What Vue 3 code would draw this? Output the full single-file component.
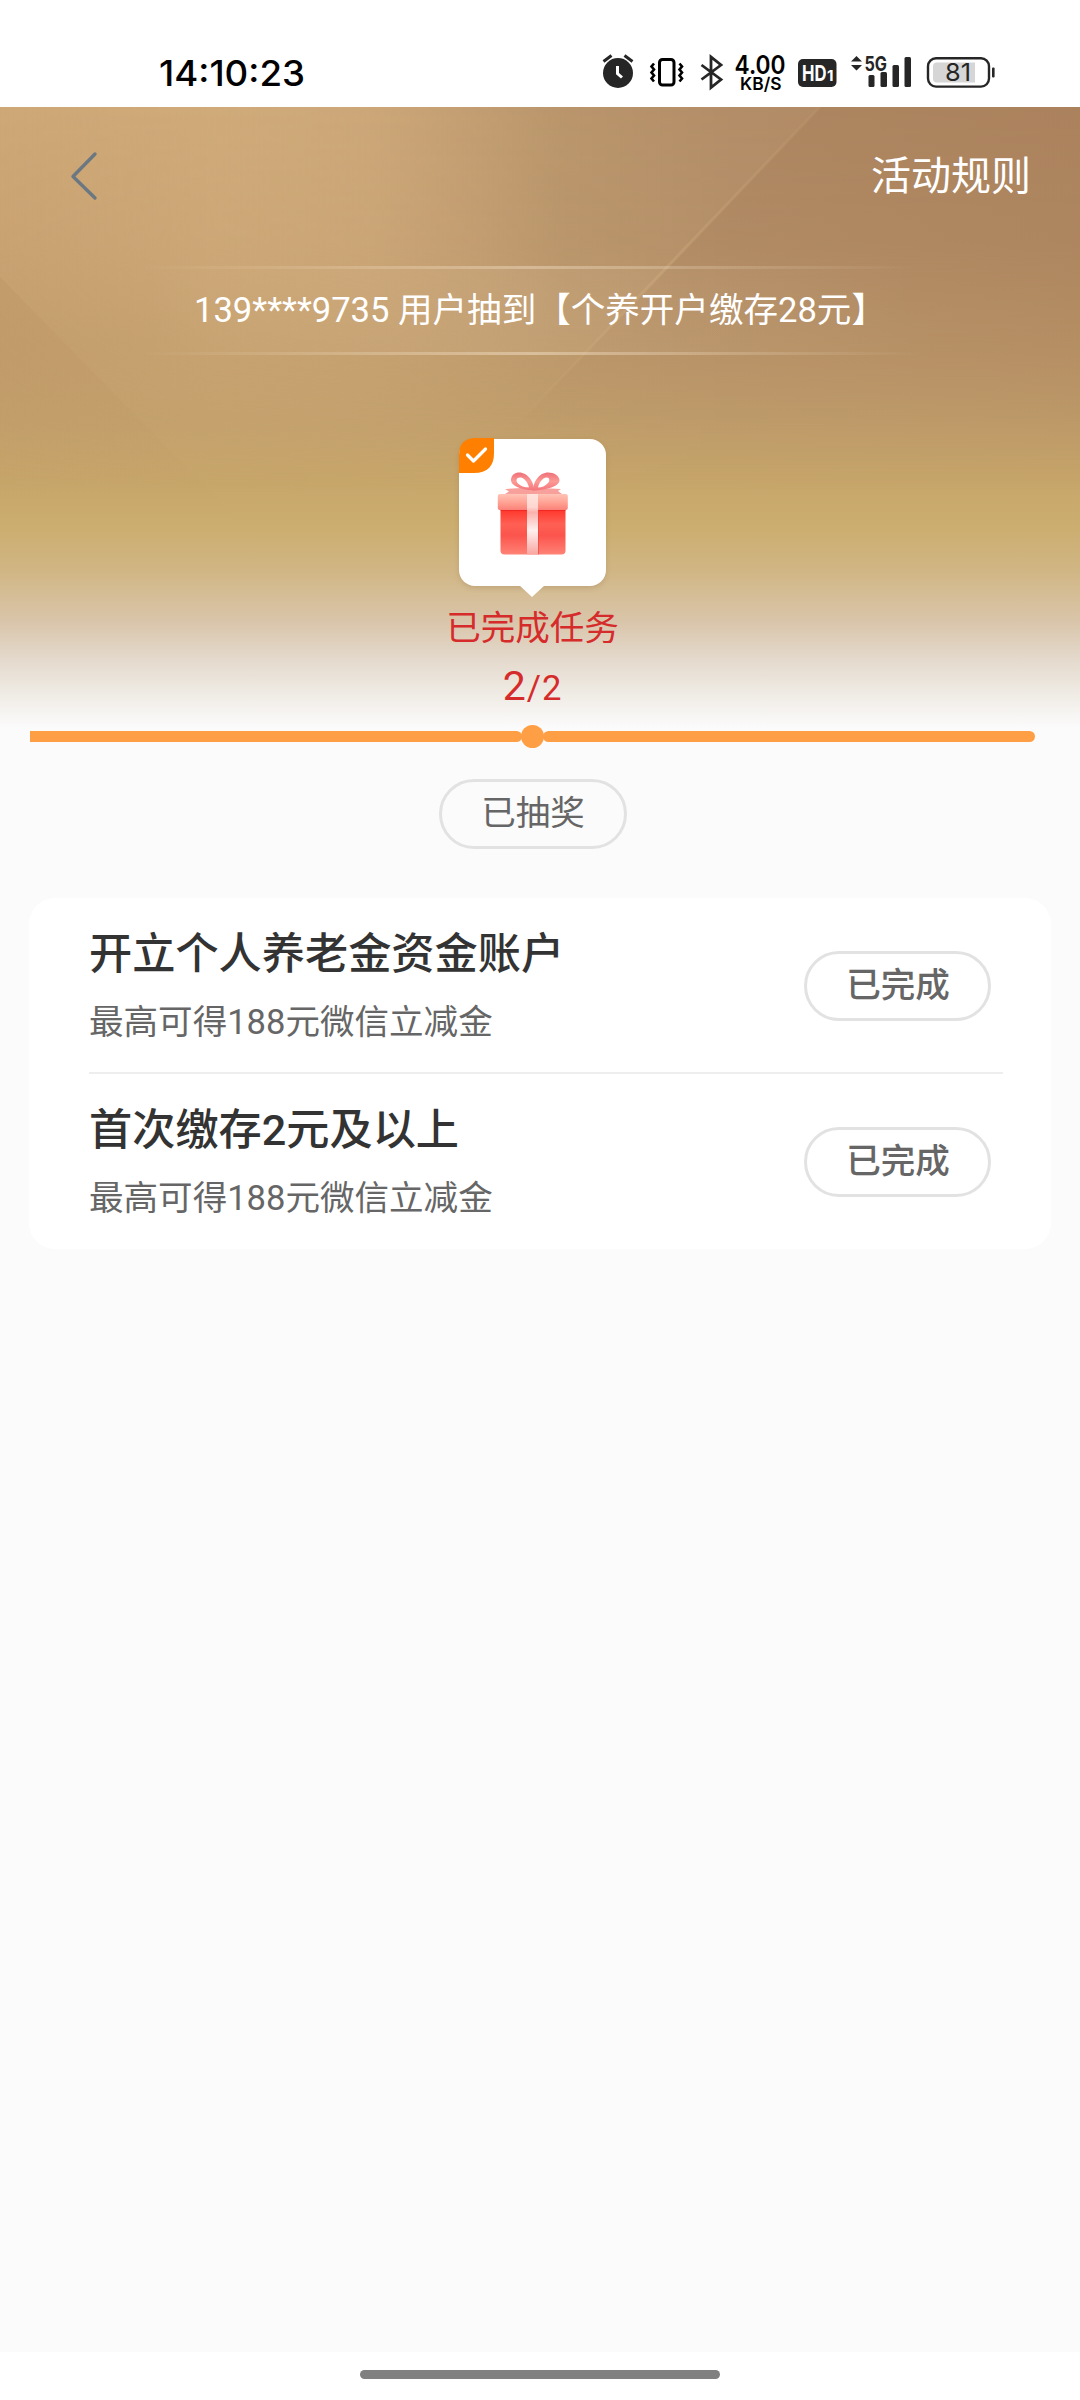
<script setup>
const tasks = [
  { title: '开立个人养老金资金账户', desc: '最高可得188元微信立减金', action: '已完成' },
  { title: '首次缴存2元及以上', desc: '最高可得188元微信立减金', action: '已完成' },
]
</script>

<template>
  <div class="screen">
    <header class="status">
      <svg class="clock" width="150" height="40" viewBox="0 0 150 40">
        <text x="-1" y="32.500" textLength="146" lengthAdjust="spacingAndGlyphs">14:10:23</text>
      </svg>
      <svg class="tray" width="406" height="40" viewBox="0 0 406 40">
        <!-- alarm -->
        <g transform="translate(0 -2)">
          <circle cx="16" cy="22" r="15" fill="#262626" />
          <path d="M1.500 10.500 9.500 4.500M30.500 10.500 22.500 4.500" stroke="#262626" stroke-width="3" fill="none" />
          <path d="M15.500 15v7.500l4.500 4" stroke="#fff" stroke-width="3" fill="none" />
        </g>
        <!-- vibrate -->
        <rect x="57.500" y="6.500" width="14.500" height="25.500" rx="3" fill="none" stroke="#000" stroke-width="3" />
        <path d="M52 10.500l-2.500 3 2.500 3-2.500 3 2.500 3-2.500 3 2.500 3M77.500 10.500l2.500 3-2.500 3 2.500 3-2.500 3 2.500 3-2.500 3" fill="none" stroke="#000" stroke-width="2.600" />
        <!-- bluetooth -->
        <path d="M99.500 12 119 26.500 109 34.500V4l10 8-19.500 14.500" fill="none" stroke="#262626" stroke-width="2.800" />
        <!-- network speed -->
        <text x="132.500" y="20.500" class="num" textLength="51" lengthAdjust="spacingAndGlyphs">4.00</text>
        <text x="138" y="37" class="unit" textLength="41.500" lengthAdjust="spacingAndGlyphs">KB/S</text>
        <!-- HD -->
        <rect x="196" y="6" width="38.500" height="28" rx="5" fill="#262626" />
        <text x="200" y="28" class="hd" textLength="24.500" lengthAdjust="spacingAndGlyphs">HD</text>
        <text x="225" y="28" class="hd1">1</text>
        <!-- mobile signal -->
        <path d="M249 8.500l5.500-5.500 5.500 5.500zM249 12l5.500 5.500 5.500-5.500z" fill="#262626" />
        <text x="262.500" y="17.500" class="gen" textLength="22.500" lengthAdjust="spacingAndGlyphs">5G</text>
        <g fill="#262626">
          <rect x="266.500" y="22" width="6" height="12" rx="1.500" />
          <rect x="278.500" y="19" width="6.500" height="15" rx="1.500" />
          <rect x="290.500" y="12" width="6.500" height="22" rx="1.500" />
          <rect x="302.500" y="4" width="6.500" height="30" rx="1.500" />
        </g>
        <!-- battery -->
        <rect x="326" y="5.200" width="61" height="28.400" rx="8" fill="#fff" stroke="#262626" stroke-width="2.400" />
        <path d="M335 9.500h38v20h-38q-4 0-4-4v-12q0-4 4-4z" fill="#d6d6d6" />
        <rect x="390" y="14.500" width="2.600" height="10" rx="1" fill="#262626" />
        <text x="343" y="28" class="bat" textLength="26" lengthAdjust="spacingAndGlyphs">81</text>
      </svg>
    </header>

    <section class="hero">
      <svg class="backdrop" width="1080" height="620" viewBox="0 0 1080 620" preserveAspectRatio="none">
        <defs>
          <linearGradient id="base" x1="0" y1="0" x2="0" y2="1">
            <stop offset="0" stop-color="#d0aa78" />
            <stop offset=".2" stop-color="#c9a372" />
            <stop offset=".38" stop-color="#c29e6c" />
            <stop offset=".5" stop-color="#c2a06b" />
            <stop offset=".6" stop-color="#c7a66a" />
            <stop offset=".68" stop-color="#ccae70" />
            <stop offset=".75" stop-color="#d1b685" />
            <stop offset=".83" stop-color="#d9c5aa" />
            <stop offset=".89" stop-color="#e4d9cc" />
            <stop offset=".95" stop-color="#f0ece6" />
            <stop offset="1" stop-color="#fbfbfb" />
          </linearGradient>
          <linearGradient id="shade" x1="0" y1="0" x2="1" y2="0">
            <stop offset="0" stop-color="#cba475" stop-opacity=".3" />
            <stop offset=".2" stop-color="#d0aa7a" stop-opacity=".7" />
            <stop offset=".34" stop-color="#cba678" stop-opacity=".8" />
            <stop offset=".52" stop-color="#b8946b" stop-opacity=".95" />
            <stop offset=".68" stop-color="#b28d67" />
            <stop offset="1" stop-color="#ae8660" />
          </linearGradient>
          <linearGradient id="fade" x1="0" y1="0" x2="0" y2="1">
            <stop offset="0" stop-color="#fff" />
            <stop offset=".22" stop-color="#fff" stop-opacity=".92" />
            <stop offset=".4" stop-color="#fff" stop-opacity=".5" />
            <stop offset=".62" stop-color="#fff" stop-opacity="0" />
          </linearGradient>
          <linearGradient id="ray" x1="820" y1="0" x2="510" y2="325" gradientUnits="userSpaceOnUse">
            <stop offset="0" stop-color="#d4b084" stop-opacity=".1" />
            <stop offset=".5" stop-color="#d4b084" stop-opacity=".35" />
            <stop offset="1" stop-color="#d4b084" stop-opacity="0" />
          </linearGradient>
          <linearGradient id="facet" x1="0" y1="0" x2="0" y2="1">
            <stop offset="0" stop-color="#a67d58" stop-opacity=".45" />
            <stop offset="1" stop-color="#a67d58" stop-opacity="0" />
          </linearGradient>
          <linearGradient id="corner" x1="0" y1="170" x2="0" y2="410" gradientUnits="userSpaceOnUse">
            <stop offset="0" stop-color="#b98f5f" stop-opacity=".28" />
            <stop offset="1" stop-color="#b98f5f" stop-opacity="0" />
          </linearGradient>
          <mask id="top"><rect width="1080" height="620" fill="url(#fade)" /></mask>
        </defs>
        <rect width="1080" height="620" fill="url(#base)" />
        <rect width="1080" height="620" fill="url(#shade)" mask="url(#top)" />
        <path d="M820 0H1080V330H505z" fill="url(#facet)" />
        <path d="M0 170 235 410H0z" fill="url(#corner)" />
        <path d="M820 0 505 330" stroke="url(#ray)" stroke-width="3" />
      </svg>

      <nav class="nav">
        <svg width="30" height="52" viewBox="0 0 30 52">
          <path d="M26 4 4 26.500 26 48" fill="none" stroke="#6b7882" stroke-width="3.400" stroke-linecap="round" stroke-linejoin="round" />
        </svg>
        <span class="rules">活动规则</span>
      </nav>

      <div class="marquee">139****9735 用户抽到【个养开户缴存28元】</div>

      <div class="bubble">
        <svg class="badge" width="35" height="35" viewBox="0 0 35 35">
          <path d="M35 0H17Q0 0 0 17V35H15Q35 35 35 15z" fill="#ff8000" />
          <path d="M8.500 17 14.500 23 26.500 11" fill="none" stroke="#fff" stroke-width="3.200" stroke-linecap="round" stroke-linejoin="round" />
        </svg>
        <svg class="gift" width="72" height="84" viewBox="0 0 72 84">
          <defs>
            <linearGradient id="box" x1="0" y1="0" x2="0" y2="1">
              <stop offset="0" stop-color="#ff3a30" />
              <stop offset=".14" stop-color="#ff3a30" />
              <stop offset=".4" stop-color="#ff6054" />
              <stop offset=".62" stop-color="#fb544c" />
              <stop offset="1" stop-color="#ff8276" />
            </linearGradient>
            <linearGradient id="lid" x1="0" y1="0" x2="0" y2="1">
              <stop offset="0" stop-color="#ffc4b6" />
              <stop offset=".6" stop-color="#ff9e90" />
              <stop offset="1" stop-color="#fb8078" />
            </linearGradient>
            <linearGradient id="band" x1="0" y1="0" x2="0" y2="1">
              <stop offset="0" stop-color="#ffe3de" />
              <stop offset=".22" stop-color="#ffd6d0" />
              <stop offset=".3" stop-color="#fbb0ac" />
              <stop offset=".6" stop-color="#fff0ee" />
              <stop offset="1" stop-color="#f9a5a0" />
            </linearGradient>
            <linearGradient id="bow" x1="0" y1="0" x2="0" y2="1">
              <stop offset="0" stop-color="#ef7078" />
              <stop offset=".5" stop-color="#fc9a96" />
              <stop offset="1" stop-color="#f4747a" />
            </linearGradient>
          </defs>
          <path d="M8 17 34 15.500 64 17 61 19 65 22H8L12 19.500z" fill="#f7a09c" />
          <path d="M37 18.500C25 18 13.500 14 14 7.500 14.500 1 22-1.500 28 2 34 6 37 12 37 18.500zM32 15.500C31 11 28 6.500 24 5.500 19 5 18.500 9 21 11.500 24 14 27 15.500 32 15.500z" fill="url(#bow)" fill-rule="evenodd" />
          <path d="M36 18.500C48 18 62.500 15 62.500 8 61.500 1 51-1.500 45 2 39 6 36 12 36 18.500zM41 15.500C42 11 45 6.500 49 5.500 53 5 53 9 51 11 48 14 45 15.500 41 15.500z" fill="url(#bow)" fill-rule="evenodd" />
          <rect x="3.500" y="32" width="65" height="50.500" rx="4" fill="url(#box)" />
          <path d="M3.500 37h65v2h-65z" fill="#e01e18" opacity=".55" />
          <rect x=".8" y="22" width="70" height="16" rx="2" fill="url(#lid)" />
          <rect x="30" y="22" width="11" height="60.500" fill="url(#band)" />
          <path d="M41.500 38v44.500" stroke="#e8423c" stroke-width="1" opacity=".6" />
        </svg>
      </div>

      <p class="label">已完成任务</p>
      <p class="count"><b>2</b>/2</p>
    </section>

    <div class="progress">
      <i class="seg first"></i><i class="dot"></i><i class="seg last"></i>
    </div>
    <div class="drawn">已抽奖</div>

    <main class="card">
      <section v-for="task in tasks" :key="task.title" class="task">
        <div>
          <h2>{{ task.title }}</h2>
          <p>{{ task.desc }}</p>
        </div>
        <span class="done">{{ task.action }}</span>
      </section>
    </main>

    <footer class="home"><i></i></footer>
  </div>
</template>

<style>
body { background: #fbfbfb; }
</style>

<style scoped>
.screen {
  width: 1080px;
  height: 2400px;
  display: flex;
  flex-direction: column;
  background: #fbfbfb;
  font-family: Roboto, "Noto Sans CJK SC", sans-serif;
  font-size: 34.56px;
  overflow: hidden;
}
p, h2 { margin: 0; font-weight: 400; }
svg { display: block; overflow: visible; }

.status {
  height: 107px;
  flex: none;
  box-sizing: border-box;
  padding: 53px 72px 0 160px;
  display: flex;
  justify-content: space-between;
  background: #fff;
}
.status text { font-family: Inter, sans-serif; }
.clock text { font-size: 35.500px; font-weight: 500; }
.status .num { font-size: 25px; font-weight: 600; }
.status .unit { font-size: 17.500px; font-weight: 600; }
.status .hd { font-size: 22px; font-weight: 700; fill: #fff; }
.status .hd1 { font-size: 15px; font-weight: 700; fill: #fff; }
.status .gen { font-size: 20px; font-weight: 700; fill: #262626; }
.status .bat { font-size: 24px; fill: #262626; }

.hero {
  position: relative;
  height: 620px;
  flex: none;
  display: flex;
  flex-direction: column;
  align-items: flex-start;
}
.backdrop { position: absolute; left: 0; top: 0; }
.nav {
  position: relative;
  width: 1080px;
  height: 138px;
  box-sizing: border-box;
  padding: 0 49px 0 69px;
  display: flex;
  align-items: center;
  justify-content: space-between;
  color: #fff;
}
.rules { font-size: 40px; padding-bottom: 6px; }
.marquee {
  position: relative;
  width: 1064px;
  height: 89px;
  margin-top: 21px;
  line-height: 89px;
  box-sizing: border-box;
  padding-left: 194px;
  color: #fff;
  white-space: nowrap;
  background:
    linear-gradient(90deg, transparent 13%, rgba(255, 240, 220, .32) 50%, transparent 87%) 0 0 / 100% 3px no-repeat,
    linear-gradient(90deg, transparent 13%, rgba(255, 240, 220, .38) 50%, transparent 87%) 0 100% / 100% 3px no-repeat,
    linear-gradient(90deg, transparent 13%, rgba(255, 240, 220, .07) 50%, transparent 87%);
}
.bubble {
  position: relative;
  width: 147px;
  height: 147px;
  margin: 84px 0 0 459px;
  border-radius: 16px;
  background: #fff;
  box-shadow: 0 2px 5px rgba(140, 105, 60, .25);
}
.bubble::after {
  content: "";
  position: absolute;
  left: 60px;
  top: 146px;
  border: 13.5px solid transparent;
  border-top: 12px solid #fff;
  border-bottom: 0;
}
.badge { position: absolute; left: 0; top: -1px; }
.gift { position: absolute; left: 38px; top: 33px; }
.label, .count { position: relative; width: 1065px; text-align: center; color: #d62b2b; }
.label { margin-top: 18px; line-height: 48px; }
.count { margin-top: 10px; line-height: 48px; letter-spacing: 1px; }
.count b { font-weight: 400; font-size: 41px; }

.progress {
  position: relative;
  height: 24px;
  flex: none;
  margin: -3px 45px 0 30px;
  display: flex;
  align-items: center;
}
.seg { flex: 1; height: 11px; background: #ff9f45; }
.first { border-radius: 0 5.500px 5.500px 0; }
.last { border-radius: 5.500px; }
.dot { width: 23px; height: 23px; margin: 0 -1px; border-radius: 50%; background: #ff9f45; }
.drawn, .done {
  box-sizing: border-box;
  width: 187px;
  height: 70px;
  border: 3px solid #e2e2e2;
  border-radius: 35px;
  line-height: 62px;
  text-align: center;
  color: #666;
}
.drawn { flex: none; width: 188px; margin: 31px 0 0 439px; line-height: 63px; }

.card {
  width: 1022px;
  height: 351px;
  flex: none;
  box-sizing: border-box;
  margin: 49px 0 0 29px;
  padding: 0 48px 0 60px;
  border-radius: 26px;
  background: #fff;
}
.task {
  height: 176px;
  box-sizing: border-box;
  padding: 25px 12px 0 0;
  display: flex;
  justify-content: space-between;
}
.task + .task { border-top: 2px solid #eee; }
.task:first-child { height: 174px; }
h2 { font-size: 43.2px; line-height: 63px; font-weight: 500; color: #333; }
.task p { margin-top: 11px; line-height: 50px; color: #666; }
.done { margin-top: 28px; padding-left: 1px; font-weight: 500; }

.home {
  height: 48px;
  flex: none;
  margin-top: auto;
  padding-top: 18px;
  box-sizing: border-box;
  display: flex;
  justify-content: center;
  background: #fff;
}
.home i { width: 360px; height: 9px; border-radius: 5px; background: #808080; }
</style>
